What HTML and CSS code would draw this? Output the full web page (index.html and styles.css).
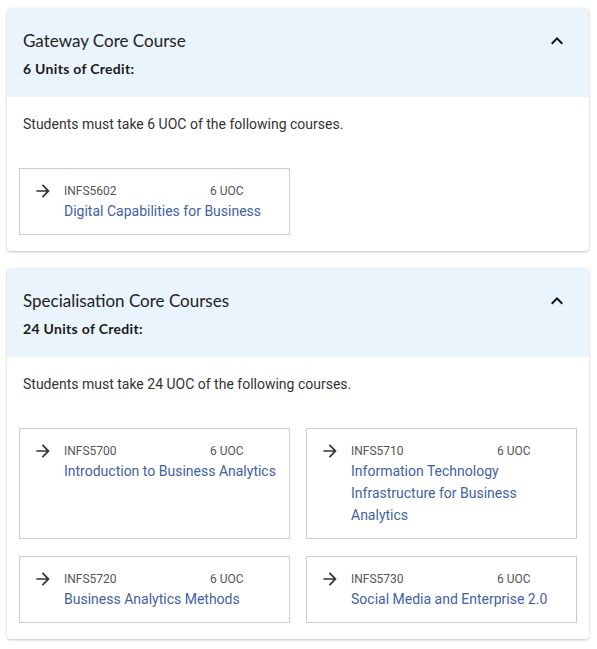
FILE: index.html
```html
<!DOCTYPE html>
<html lang="en">
<head>
  <meta charset="UTF-8" />
  <meta name="viewport" content="width=device-width, initial-scale=1.0"/>
  <title>Program Structure</title>
  <link rel="stylesheet" href="styles.css">
</head>
<body>
  <div class="page">
    <section class="block">
      <div class="block-head">
        <div>
          <h2>Gateway Core Course</h2>
          <p class="credit">6 Units of Credit:</p>
        </div>
        <svg class="chevron" viewBox="0 0 24 24" width="24" height="24"><path d="M12 8l-6 6 1.41 1.41L12 10.83l4.59 4.58L18 14z"/></svg>
      </div>
      <div class="block-body">
        <p class="rule">Students must take 6 UOC of the following courses.</p>
        <div class="courses">
          <a class="course" href="#">
            <svg class="arrow" viewBox="0 0 24 24" width="20" height="20"><path d="M12 4l-1.41 1.41L16.17 11H4v2h12.17l-5.58 5.59L12 20l8-8z"/></svg>
            <div class="course-info">
              <div class="course-meta"><span class="code">INFS5602</span><span>6 UOC</span></div>
              <div class="course-name">Digital Capabilities for Business</div>
            </div>
          </a>
        </div>
      </div>
    </section>

    <section class="block">
      <div class="block-head">
        <div>
          <h2>Specialisation Core Courses</h2>
          <p class="credit">24 Units of Credit:</p>
        </div>
        <svg class="chevron" viewBox="0 0 24 24" width="24" height="24"><path d="M12 8l-6 6 1.41 1.41L12 10.83l4.59 4.58L18 14z"/></svg>
      </div>
      <div class="block-body">
        <p class="rule">Students must take 24 UOC of the following courses.</p>
        <div class="courses">
          <a class="course" href="#">
            <svg class="arrow" viewBox="0 0 24 24" width="20" height="20"><path d="M12 4l-1.41 1.41L16.17 11H4v2h12.17l-5.58 5.59L12 20l8-8z"/></svg>
            <div class="course-info">
              <div class="course-meta"><span class="code">INFS5700</span><span>6 UOC</span></div>
              <div class="course-name">Introduction to Business Analytics</div>
            </div>
          </a>
          <a class="course" href="#">
            <svg class="arrow" viewBox="0 0 24 24" width="20" height="20"><path d="M12 4l-1.41 1.41L16.17 11H4v2h12.17l-5.58 5.59L12 20l8-8z"/></svg>
            <div class="course-info">
              <div class="course-meta"><span class="code">INFS5710</span><span>6 UOC</span></div>
              <div class="course-name">Information Technology Infrastructure for Business Analytics</div>
            </div>
          </a>
          <a class="course" href="#">
            <svg class="arrow" viewBox="0 0 24 24" width="20" height="20"><path d="M12 4l-1.41 1.41L16.17 11H4v2h12.17l-5.58 5.59L12 20l8-8z"/></svg>
            <div class="course-info">
              <div class="course-meta"><span class="code">INFS5720</span><span>6 UOC</span></div>
              <div class="course-name">Business Analytics Methods</div>
            </div>
          </a>
          <a class="course" href="#">
            <svg class="arrow" viewBox="0 0 24 24" width="20" height="20"><path d="M12 4l-1.41 1.41L16.17 11H4v2h12.17l-5.58 5.59L12 20l8-8z"/></svg>
            <div class="course-info">
              <div class="course-meta"><span class="code">INFS5730</span><span>6 UOC</span></div>
              <div class="course-name">Social Media and Enterprise 2.0</div>
            </div>
          </a>
        </div>
      </div>
    </section>
  </div>
</body>
</html>
```

FILE: styles.css
```css
body {
  margin: 0;
  background: #fff;
  font-family: Roboto, "Liberation Sans", sans-serif;
  color: #333;
}
.page {
  padding: 8px 8px 8px 7px;
  display: flex;
  flex-direction: column;
  gap: 17px;
}
.block {
  background: #fff;
  border-radius: 4px;
  box-shadow: 0 1px 3px rgba(0,0,0,0.18), 0 1px 2px rgba(0,0,0,0.08);
  overflow: hidden;
}
.block-head {
  background: #eaf4fc;
  padding: 22px 20px 18px 16px;
  display: flex;
  justify-content: space-between;
  align-items: flex-start;
}
.block-head h2 {
  margin: 0 0 7px;
  font-family: Lato, "Open Sans", sans-serif;
  font-weight: 400;
  font-size: 17px;
  line-height: 22px;
  color: #222;
}
.credit {
  margin: 0;
  font-family: Lato, "Open Sans", sans-serif;
  font-weight: 700;
  font-size: 14px;
  line-height: 20px;
  letter-spacing: 0.3px;
  color: #1a1a1a;
}
.chevron {
  fill: #111;
  margin-top: -1px;
}
.block-body {
  padding: 17px 13px 16px 12px;
}
.rule {
  margin: 0 0 34px 4px;
  font-size: 14px;
  line-height: 20px;
  color: #333;
}
.courses {
  display: grid;
  grid-template-columns: 271px 271px;
  gap: 17px 16px;
}
.course {
  display: flex;
  align-items: flex-start;
  gap: 11px;
  border: 1px solid #ccc;
  padding: 14px 12px 12px 13px;
  text-decoration: none;
}
.arrow {
  fill: #333;
  flex: none;
  margin-top: -2px;
}
.course-meta {
  display: flex;
  font-size: 12px;
  line-height: 16px;
  color: #555;
}
.code {
  width: 146px;
}
.course-name {
  margin-top: 1px;
  font-size: 14px;
  line-height: 22px;
  color: #4262a3;
}
```
